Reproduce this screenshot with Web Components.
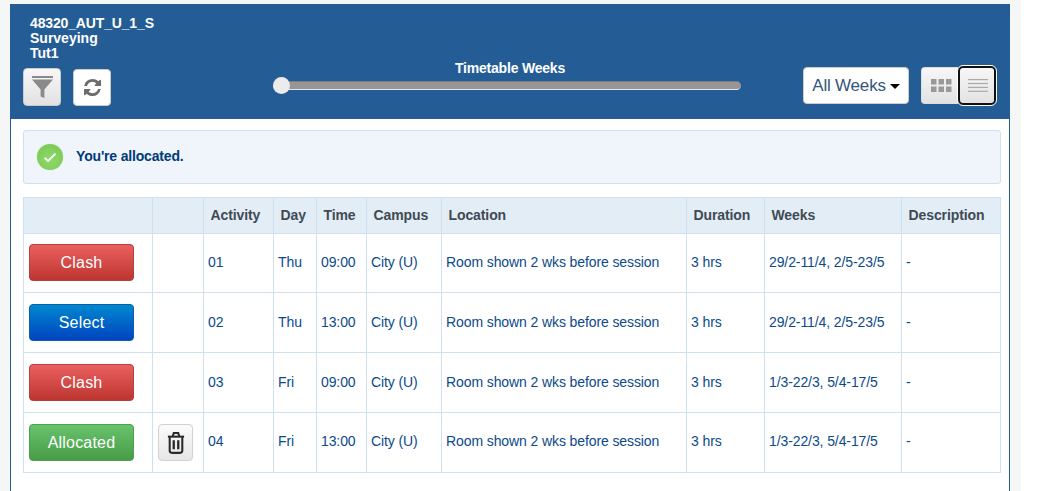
<!DOCTYPE html>
<html><head><meta charset="utf-8"><title>Timetable</title>
<style>
html,body{margin:0;padding:0;background:#fff;height:100%;overflow:hidden}
body{font-family:"Liberation Sans",Arial,sans-serif;font-size:14px}
</style></head><body>
<tt-page>
  <tt-header></tt-header>
  <tt-alert>You're allocated.</tt-alert>
  <tt-table></tt-table>
</tt-page>
<script>
function def(name,html,init){
  customElements.define(name,class extends HTMLElement{
    connectedCallback(){
      if(this.shadowRoot)return;
      this.attachShadow({mode:'open'}).innerHTML=typeof html==='function'?html(this):html;
      if(init)init(this);
    }
  });
}
def('tt-page',`<style>
:host{display:block;width:1021px;height:491px;box-sizing:border-box;background:#f5f7f7;padding:4px 11px 0 10px}
.panel{background:#fff;height:487px;box-sizing:border-box;border-left:1px solid #245d95;border-right:1px solid #245d95;}
</style><div class="panel"><slot></slot></div>`);

const btnBase=`display:inline-flex;align-items:center;justify-content:center;box-sizing:border-box;border-radius:4px;`;
def('tt-header',`<style>
:host{display:flex;margin:0 -1px;height:115px;box-sizing:border-box;background:#245d95;padding:12px 12px 14px 13px;color:#fff;position:relative}
.left{width:250px;display:flex;flex-direction:column;flex:none}
.t{font-weight:700;font-size:14px;line-height:15px;letter-spacing:-.15px;padding-left:7px}
.tools{display:flex;gap:12px;margin-top:8px}
.ib{${btnBase}width:38px;height:37px;border:1px solid #ccc;background:#fff}
.ib.f{background:linear-gradient(#f7f7f7,#e2e2e2);margin-top:-1px;height:38px}
.mid{width:468px;display:flex;flex-direction:column;align-items:stretch;flex:none;padding-top:44px}
.lbl{font-weight:700;font-size:14px;line-height:16px;text-align:center;margin-bottom:5px;padding-left:6px;letter-spacing:-.2px}
.track{height:9px;background:#969696;border-bottom:1px solid #e8e8e8;border-top:1px solid #7c7c7c;box-sizing:border-box;border-radius:5px;position:relative}
.thumb{position:absolute;left:0;top:-5px;width:17px;height:17px;border-radius:50%;background:#ececec;}
.sel{${btnBase}width:106px;height:37px;background:#fff;border:1px solid #ccc;color:#33567c;font-size:17px;margin-left:62px;margin-top:51px;flex:none;gap:4px;letter-spacing:-.2px}
.car{width:0;height:0;border-left:5px solid transparent;border-right:5px solid transparent;border-top:5px solid #000;margin-top:2px}
.tog{display:flex;margin-left:12px;margin-top:51px;height:37px;flex:none}
.tb{${btnBase}height:37px;background:linear-gradient(#f7f7f7,#e2e2e2)}
.tb.a{width:37px;padding-left:3px;border-radius:4px 0 0 4px;border:1px solid #ddd;border-right:0}
.tb.b{width:38px;padding-left:2px;border:2px solid #111;outline:1px solid #fff;border-radius:5px;position:relative;margin-top:-1px;height:39px}
</style>
<div class="left">
 <div class="t">48320_AUT_U_1_S</div><div class="t" style="letter-spacing:0">Surveying</div><div class="t" style="letter-spacing:0">Tut1</div>
 <div class="tools">
  <span class="ib f"><svg width="21" height="22" viewBox="0 0 21 22"><rect x="0" y="0" width="21" height="2" fill="#8a8a8a"/><path d="M0 3.500h21L12.400 13.500v8.500l-3.800-1.500v-7z" fill="#8a8a8a"/></svg></span>
  <span class="ib"><svg width="17" height="17" viewBox="0 0 1536 1536"><path fill="#6b6b6b" d="M1511 928q0 5-1 7-64 268-268 434.500T764 1536q-146 0-282.500-55T238 1324l-129 129q-19 19-45 19t-45-19-19-45V960q0-26 19-45t45-19h448q26 0 45 19t19 45-19 45l-137 137q71 66 161 102t187 36q134 0 250-65t186-179q11-17 53-117 8-23 30-23h192q13 0 22.500 9.500t9.500 22.500zm25-800v448q0 26-19 45t-45 19h-448q-26 0-45-19t-19-45 19-45l138-138Q969 256 768 256q-134 0-250 65T332 500q-11 17-53 117-8 23-30 23H50q-13 0-22.500-9.500T18 608v-7q65-268 270-434.500T768 0q146 0 284 55.500T1297 212l130-129q19-19 45-19t45 19 19 45z"/></svg></span>
 </div>
</div>
<div class="mid"><div class="lbl">Timetable Weeks</div><div class="track"><div class="thumb"></div></div></div>
<div class="sel">All Weeks<span class="car"></span></div>
<div class="tog">
 <span class="tb a"><svg width="21" height="13" viewBox="0 0 21 13" fill="#999"><rect width="5.500" height="5.500" /><rect x="7.500" width="5.500" height="5.500"/><rect x="15" width="5.500" height="5.500"/><rect y="7.500" width="5.500" height="5.500"/><rect x="7.500" y="7.500" width="5.500" height="5.500"/><rect x="15" y="7.500" width="5.500" height="5.500"/></svg></span>
 <span class="tb b"><svg width="20" height="13" viewBox="0 0 20 13" fill="#aaa"><rect width="20" height="1.200"/><rect y="3.900" width="20" height="1.200"/><rect y="7.800" width="20" height="1.200"/><rect y="11.700" width="20" height="1.200"/></svg></span>
</div>`);

def('tt-alert',`<style>
:host{display:flex;align-items:center;box-sizing:border-box;height:54px;margin:11px 8px 13px 12px;background:#eff5fa;border:1px solid #cfe0f0;border-radius:3px;padding-left:13px;color:#003a78;font-weight:700;font-size:14px;letter-spacing:-.17px;line-height:16px;padding-bottom:2px}
.ok{width:26px;height:26px;border-radius:50%;background:radial-gradient(circle at 50% 60%,#8fd96b,#78c552);box-shadow:0 0 1px #8fd96b;display:flex;align-items:center;justify-content:center;margin-right:13px;margin-top:2px;flex:none}
</style><span class="ok"><svg width="14" height="11" viewBox="0 0 14 11"><path d="M1.500 5.800 5 9 12.500 1.800" fill="none" stroke="#f4fbef" stroke-width="2"/></svg></span><slot></slot>`);

const rows=[
 ['Clash','01','Thu','09:00','29/2-11/4, 2/5-23/5'],
 ['Select','02','Thu','13:00','29/2-11/4, 2/5-23/5'],
 ['Clash','03','Fri','09:00','1/3-22/3, 5/4-17/5'],
 ['Allocated','04','Fri','13:00','1/3-22/3, 5/4-17/5'],
];
const widths=[129,51,70,43,50,75,245,78,137,99];
const trash=`<svg width="18" height="23" viewBox="0 0 20 25" fill="none" stroke="#2b2b2b" stroke-width="2.300"><path d="M1 6h18" /><path d="M6.500 5.500 7.500 2h5l1 3.500"/><path d="M3 6v15.500Q3 24 5.500 24h9q2.500 0 2.500-2.500V6"/><path d="M7.500 10v10M12.500 10v10" stroke-width="2.600"/></svg>`;
def('tt-table',()=>`<style>
:host{display:block;margin:0 8px 0 12px;width:977px}
table{border-collapse:collapse;table-layout:fixed;width:977px;color:#0b4a8a;font-size:14px}
th,td{border:1px solid #cfe0f0;padding:0;text-align:left;box-sizing:border-box;overflow:hidden;white-space:nowrap}
th{background:#e3edf6;color:#404a54;font-weight:700;height:35px;line-height:35px;padding-left:6.500px;letter-spacing:-.1px}
td{height:60px;font-size:14px;letter-spacing:-.1px;padding-bottom:2px}
tr.r0 td{height:59px;padding-bottom:3px}
tr.r3 td.t{padding-bottom:4px}
td.a{padding-left:5px}
.btn{display:flex;align-items:center;justify-content:center;box-sizing:border-box;width:105px;height:37px;padding-top:1px;border-radius:4px;color:#fff;font-size:16px;letter-spacing:.2px;margin-top:1px}
.Clash{background:linear-gradient(#ea6060,#bd352f);border:1px solid #b5403c}
.Select{background:linear-gradient(#0088d0,#0044c0);border:1px solid #0b5ea8}
.Allocated{background:linear-gradient(#68c36b,#479c48);border:1px solid #4c9f4e}
.tr{display:flex;align-items:center;justify-content:center;box-sizing:border-box;width:35px;height:37px;border:1px solid #d2d2d2;border-radius:4px;background:linear-gradient(#fbfbfb,#e6e6e6);margin-top:1px}
td.t{padding-left:4px}
td.tc{padding-left:5px}
</style><table><colgroup>${widths.map(w=>`<col style="width:${w}px">`).join('')}</colgroup>
<thead><tr><th></th><th></th><th>Activity</th><th>Day</th><th>Time</th><th>Campus</th><th>Location</th><th>Duration</th><th>Weeks</th><th>Description</th></tr></thead>
<tbody>${rows.map((r,i)=>`<tr class="r${i}"><td class="a"><span class="btn ${r[0]}">${r[0]}</span></td><td class="tc">${r[0]==='Allocated'?`<span class="tr">${trash}</span>`:''}</td><td class="t">${r[1]}</td><td class="t">${r[2]}</td><td class="t">${r[3]}</td><td class="t">City (U)</td><td class="t">Room shown 2 wks before session</td><td class="t">3 hrs</td><td class="t">${r[4]}</td><td class="t">-</td></tr>`).join('')}</tbody></table>`);
</script>
</body></html>
